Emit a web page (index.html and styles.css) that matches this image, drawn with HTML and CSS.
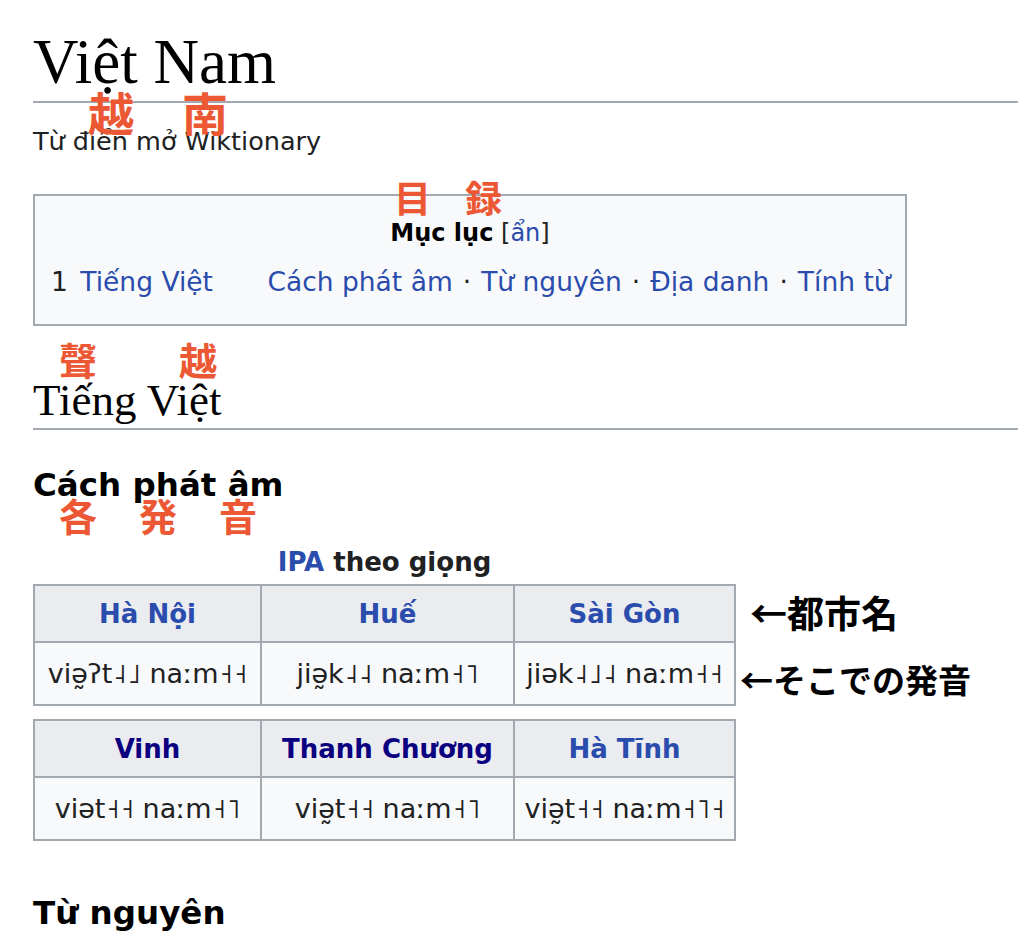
FILE: index.html
```html
<!DOCTYPE html>
<html>
<head>
    <title>Việt Nam – Wiktionary</title>
    <meta charset="utf-8" />
    <link rel="stylesheet" href="styles.css">
</head>
<body>
    <div class="page">
        <h1 class="page-title">Việt Nam<span class="note note-title">越南</span></h1>
        <div class="tagline">Từ điển mở Wiktionary</div>

        <div class="toc">
            <div class="toc-title">
                <span class="note note-toc">目録</span>
                <b>Mục lục</b> <span class="toc-toggle">[<a href="#">ẩn</a>]</span>
            </div>
            <div class="toc-list">
                <span class="toc-num">1</span>
                <a href="#" class="toc-lang">Tiếng Việt</a>
                <a href="#">Cách phát âm</a><span class="dot">·</span><a href="#">Từ nguyên</a><span class="dot">·</span><a href="#">Địa danh</a><span class="dot">·</span><a href="#">Tính từ</a>
            </div>
        </div>

        <h2 class="lang-heading"><span class="note note-lang">聲越</span>Tiếng Việt</h2>

        <h3 class="section-heading section-pron">Cách phát âm<span class="note note-pron">各発音</span></h3>

        <div class="ipa-block">
            <div class="ipa-caption"><a href="#">IPA</a> theo giọng</div>
            <div class="ipa-row">
                <table class="ipa-table">
                    <tr>
                        <th><a href="#">Hà Nội</a></th>
                        <th><a href="#">Huế</a></th>
                        <th><a href="#">Sài Gòn</a></th>
                    </tr>
                    <tr>
                        <td>viə̰ʔt<span class="tone">˨</span><span class="tone">˩</span> naːm<span class="tone">˧</span><span class="tone">˧</span></td>
                        <td>jiə̰k<span class="tone">˨</span><span class="tone">˨</span> naːm<span class="tone">˧</span><span class="tone">˥</span></td>
                        <td>jiək<span class="tone">˨</span><span class="tone">˩</span><span class="tone">˨</span> naːm<span class="tone">˧</span><span class="tone">˧</span></td>
                    </tr>
                </table>
                <div class="side-notes">
                    <div class="side-note side-note-head">←都市名</div>
                    <div class="side-note side-note-body">←そこでの発音</div>
                </div>
            </div>
            <table class="ipa-table">
                <tr>
                    <th><a href="#" class="visited">Vinh</a></th>
                    <th><a href="#" class="visited">Thanh Chương</a></th>
                    <th><a href="#">Hà Tĩnh</a></th>
                </tr>
                <tr>
                    <td>viət<span class="tone">˧</span><span class="tone">˧</span> naːm<span class="tone">˧</span><span class="tone">˥</span></td>
                    <td>viə̰t<span class="tone">˧</span><span class="tone">˧</span> naːm<span class="tone">˧</span><span class="tone">˥</span></td>
                    <td>viə̰t<span class="tone">˧</span><span class="tone">˧</span> naːm<span class="tone">˧</span><span class="tone">˥</span><span class="tone">˧</span></td>
                </tr>
            </table>
        </div>

        <h3 class="section-heading section-etym">Từ nguyên</h3>
    </div>
</body>
</html>
```

FILE: styles.css
```css
body{
    margin:0;
    background:#fff;
    color:#202122;
    font-family:"DejaVu Sans", "Noto Sans CJK JP", sans-serif;
}
a{
    color:#2a4cad;
    text-decoration:none;
}
a.visited{
    color:#0b0080;
}
.page{
    padding:0 0 0 33px;
}

/* red kanji notes drawn over the page */
.note{
    position:absolute;
    font-family:"Noto Sans CJK JP", sans-serif;
    font-weight:700;
    color:#eb5833;
    white-space:nowrap;
    line-height:1;
}
.note-title{
    left:55px;
    top:57px;
    font-size:46px;
    letter-spacing:48px;
}
.note-toc{
    left:343px;
    top:-34px;
    font-size:37px;
    letter-spacing:34px;
}
.note-lang{
    left:26px;
    top:-36px;
    font-size:38px;
    letter-spacing:82px;
}
.note-pron{
    left:26px;
    top:31px;
    font-size:38px;
    letter-spacing:42px;
}

.page-title{
    position:relative;
    margin:31px 0 0;
    padding-bottom:8px;
    font-family:"Liberation Serif", serif;
    font-weight:normal;
    font-size:63px;
    line-height:62px;
    color:#000;
    border-bottom:2px solid #a2a9b1;
}
.tagline{
    margin-top:23px;
    font-size:25.5px;
    line-height:30px;
    color:#202122;
}

.toc{
    box-sizing:border-box;
    width:874px;
    margin-top:38px;
    border:2px solid #a2a9b1;
    background:#f8f9fa;
    padding:17px 16px 22px 16px;
}
.toc-title{
    position:relative;
    text-align:center;
    font-size:24px;
    line-height:40px;
}
.toc-title b{
    color:#000;
}
.toc-list{
    margin-top:9px;
    font-size:26.5px;
    line-height:40px;
    white-space:nowrap;
}
.toc-num{
    margin-right:4px;
}
.toc-lang{
    margin-right:46px;
}
.dot{
    margin:0 10px;
}

.lang-heading{
    position:relative;
    margin:50px 0 0;
    padding-bottom:4px;
    font-family:"Liberation Serif", serif;
    font-weight:normal;
    font-size:45px;
    line-height:48px;
    color:#000;
    border-bottom:2px solid #a2a9b1;
}
.section-heading{
    position:relative;
    margin:0;
    font-size:32.5px;
    line-height:40px;
    font-weight:700;
    color:#000;
}
.section-pron{
    margin-top:35px;
}
.section-etym{
    margin-top:52px;
}

.ipa-block{
    margin-top:40px;
}
.ipa-caption{
    width:703px;
    margin-bottom:5px;
    text-align:center;
    font-size:26px;
    font-weight:700;
    line-height:34px;
}
.ipa-row{
    display:flex;
    align-items:flex-start;
    margin-bottom:13px;
}
.ipa-table{
    border-collapse:collapse;
    width:703px;
    table-layout:fixed;
}
.ipa-table th,
.ipa-table td{
    border:2px solid #a2a9b1;
    text-align:center;
    padding:0;
    white-space:nowrap;
}
.ipa-table th:nth-child(1){ width:225px; }
.ipa-table th:nth-child(2){ width:251px; }
.ipa-table th{
    background:#eaecf0;
    height:55px;
    font-size:26px;
    font-weight:700;
}
.ipa-table td{
    background:#f8f9fa;
    height:61px;
    font-size:27px;
    color:#202122;
}
/* keep tone letters apart, the font would join them into one contour */
.tone{
    margin-left:1px;
}
.side-notes{
    display:flex;
    flex-direction:column;
    font-family:"Noto Sans CJK JP", sans-serif;
    font-weight:700;
    color:#000;
}
.side-note{
    line-height:40px;
    white-space:nowrap;
}
.side-note-head{
    margin:8px 0 0 14px;
    font-size:37px;
}
.side-note-body{
    margin:27px 0 0 4px;
    font-size:33px;
}
```
